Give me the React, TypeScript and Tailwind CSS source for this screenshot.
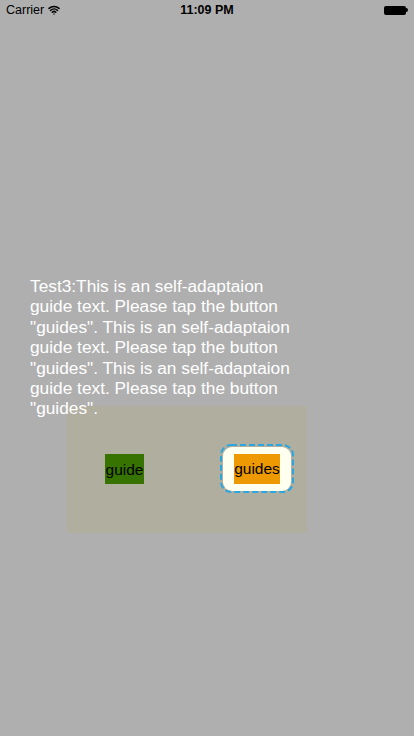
import { Wifi } from 'lucide-react';

function StatusBar() {
  return (
    <div className="relative flex h-5 items-center justify-between px-[6px] text-[12.5px] text-black">
      <div className="flex items-center gap-[4px]">
        <span>Carrier</span>
        <Wifi className="h-[12px] w-[12px]" strokeWidth={3} />
      </div>
      <span className="absolute left-1/2 -translate-x-1/2 font-semibold">11:09 PM</span>
      <div className="flex items-center">
        <div className="h-[9px] w-[22px] rounded-[2px] bg-black" />
        <div className="h-[4px] w-[2px] rounded-r-sm bg-black" />
      </div>
    </div>
  );
}

export default function App() {
  return (
    <div
      className="h-[736px] w-[414px] overflow-hidden bg-[#afafaf]"
      style={{ fontFamily: '"Liberation Sans", Arial, sans-serif' }}
    >
      <StatusBar />
      <p className="ml-[30px] mt-[256px] w-[272px] text-[17.3px] leading-[20.4px] text-white">
        Test3:This is an self-adaptaion guide text. Please tap the button "guides". This is an
        self-adaptaion guide text. Please tap the button "guides". This is an self-adaptaion guide
        text. Please tap the button "guides".
      </p>
      <div className="ml-[67px] mt-[-13px] flex h-[127px] w-[240px] items-center bg-[#b0ae9f]">
        <div className="ml-[38px] flex h-[30px] w-[39px] items-center justify-center bg-[#377300] text-[15.5px] text-black">
          guide
        </div>
        {/* selected button with dashed focus ring */}
        <div className="relative ml-[76px] mt-[-1px] flex h-[49px] w-[74px] items-center justify-center">
          <svg className="absolute inset-0" width="74" height="49" viewBox="0 0 74 49">
            <rect
              x="1"
              y="1"
              width="72"
              height="47"
              rx="10"
              fill="none"
              stroke="#2aa6e0"
              strokeWidth="2"
              strokeDasharray="6 3"
            />
          </svg>
          <div className="flex h-[44px] w-[68px] items-center justify-center rounded-[9px] bg-[#fffff0]">
            <div className="flex h-[30px] w-[46px] items-center justify-center bg-[#ee9900] text-[15.5px] text-black">
              guides
            </div>
          </div>
        </div>
      </div>
    </div>
  );
}
